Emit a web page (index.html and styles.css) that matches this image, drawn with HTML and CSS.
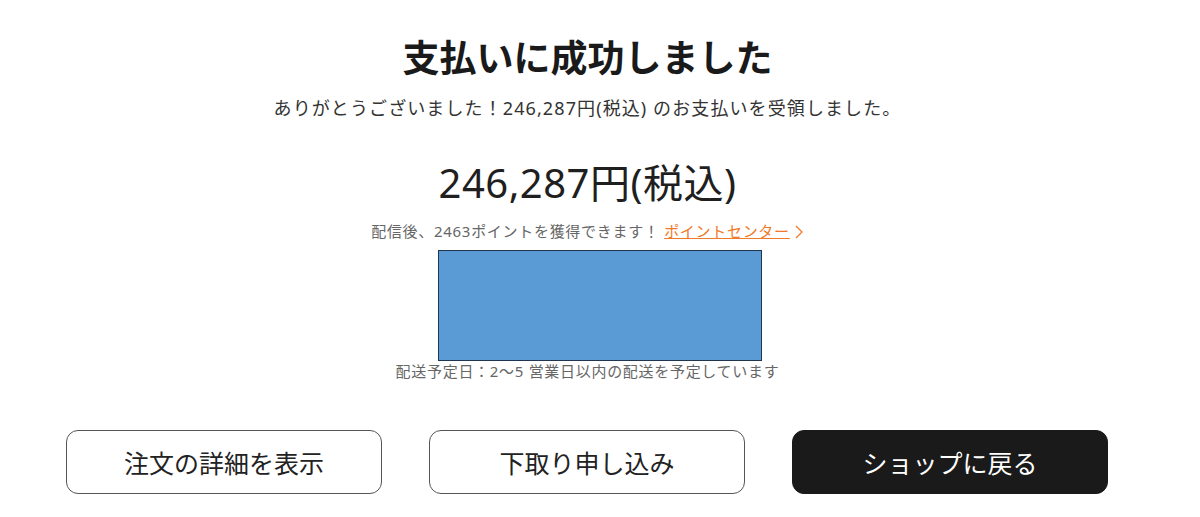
FILE: index.html
```html
<!DOCTYPE html>
<html lang="ja">
<head>
<meta charset="utf-8">
<title>支払いに成功しました</title>
<link rel="stylesheet" href="styles.css">
</head>
<body>
<main class="page">
  <h1 class="title">支払いに成功しました</h1>
  <p class="lead">ありがとうございました！246,287円(税込) のお支払いを受領しました。</p>
  <p class="amount">246,287円(税込)</p>
  <p class="points">配信後、2463ポイントを獲得できます！ <a class="link" href="#">ポイントセンター</a><svg class="chev" width="10" height="16" viewBox="0 0 10 16"><path d="M2 2 L8 8 L2 14" fill="none" stroke="#f07a2a" stroke-width="1.3"/></svg></p>
  <div class="banner"></div>
  <p class="delivery">配送予定日：2〜5 営業日以内の配送を予定しています</p>
  <div class="actions">
    <a class="btn" href="#">注文の詳細を表示</a>
    <a class="btn" href="#">下取り申し込み</a>
    <a class="btn btn-dark" href="#">ショップに戻る</a>
  </div>
</main>
</body>
</html>
```

FILE: styles.css
```css
* { box-sizing: border-box; }
html, body { margin: 0; padding: 0; background: #fff; }
body {
  font-family: "Noto Sans", "Noto Sans CJK JP", sans-serif;
  color: #222;
}
.page {
  width: 1043px;
  margin-left: 66px;
  padding-top: 32px;
  text-align: center;
}
.title {
  margin: 0;
  font-family: "Noto Sans CJK JP", sans-serif;
  font-size: 37px;
  line-height: 48px;
  font-weight: 700;
  color: #1a1a1a;
}
.lead {
  margin: 15px 0 0;
  font-size: 18px;
  line-height: 26px;
  letter-spacing: 1.1px;
  color: #333;
}
.amount {
  margin: 36px 0 0;
  font-size: 40px;
  line-height: 52px;
  letter-spacing: 0.5px;
  color: #1f1f1f;
}
.points {
  margin: 12px 0 0;
  font-size: 15px;
  line-height: 20px;
  letter-spacing: 0.7px;
  color: #666;
}
.link {
  color: #f07a2a;
  text-decoration: underline;
}
.chev { vertical-align: -3px; margin-left: 4px; }
.banner {
  width: 324px;
  height: 111px;
  margin: 9px 0 0 372px;
  background: #5b9bd5;
  border: 1px solid #1f3550;
}
.delivery {
  margin: 0;
  font-size: 15px;
  line-height: 20px;
  letter-spacing: 0.7px;
  color: #666;
}
.actions {
  margin-top: 49px;
  display: flex;
  gap: 47px;
}
.btn {
  width: 316px;
  height: 64px;
  display: flex;
  align-items: center;
  justify-content: center;
  border: 1px solid #555;
  border-radius: 12px;
  font-size: 25px;
  color: #222;
  text-decoration: none;
  background: #fff;
}
.btn-dark {
  background: #1a1a1a;
  border-color: #1a1a1a;
  color: #fff;
}
```
